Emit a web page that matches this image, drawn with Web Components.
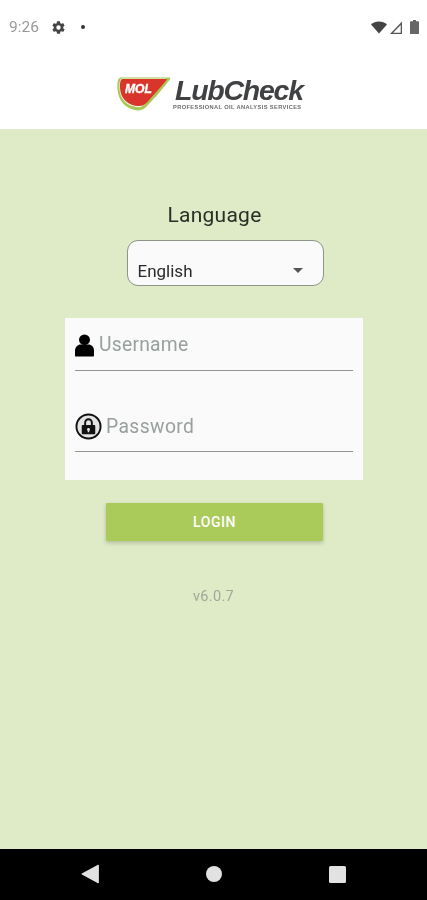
<!DOCTYPE html>
<html><head><meta charset="utf-8"><title>LubCheck</title>
<style>html,body{margin:0;padding:0;height:100%}body{font-family:Roboto,sans-serif;width:427px;height:900px;overflow:hidden}</style>
</head><body>
<app-screen>
  <status-bar slot="status"></status-bar>
  <brand-header slot="header"></brand-header>
  <login-form slot="main"></login-form>
  <nav-bar slot="nav"></nav-bar>
</app-screen>
<script>
function def(name, html){
  customElements.define(name, class extends HTMLElement{
    constructor(){super();this.attachShadow({mode:'open'}).innerHTML=html;}
  });
}
def('app-screen',`<style>:host{display:flex;flex-direction:column;width:427px;height:900px;background:#fff}
.m{flex:1;display:flex;min-height:0}</style>
<slot name="status"></slot><slot name="header"></slot><div class="m"><slot name="main"></slot></div><slot name="nav"></slot>`);

def('status-bar',`<style>:host{display:flex;align-items:center;height:54px;padding:0 8px 0 9px;box-sizing:border-box;color:#999;font:15.500px Roboto,sans-serif;filter:blur(.5px)}
.t{width:42px}svg{display:block}.dot{width:4px;height:4px;border-radius:50%;background:#333;margin-left:15px}
.sp{flex:1}</style>
<span class="t">9:26</span>
<svg width="15" height="15" viewBox="0 0 24 24"><path fill="#444" fill-rule="evenodd" d="M19.4 13c.04-.32.1-.66.1-1s-.06-.68-.1-1l2.100-1.650c.2-.15.25-.42.12-.64l-2-3.460c-.12-.22-.4-.3-.6-.22l-2.500 1c-.52-.4-1.080-.73-1.700-.98l-.37-2.650A.5.5 0 0 0 14 2h-4a.5.5 0 0 0-.5.42l-.37 2.650c-.62.25-1.180.58-1.700.98l-2.500-1c-.22-.08-.48 0-.6.22l-2 3.460c-.13.22-.07.49.12.64L4.570 11c-.04.32-.07.66-.07 1s.03.68.07 1l-2.100 1.650c-.2.15-.25.42-.12.64l2 3.460c.12.22.4.3.6.22l2.500-1c.52.4 1.080.73 1.700.98l.37 2.650c.04.24.25.42.5.42h4c.25 0 .46-.18.5-.42l.37-2.650c.62-.25 1.180-.58 1.700-.98l2.500 1c.22.08.48 0 .6-.22l2-3.460c.13-.22.07-.49-.12-.64L19.400 13zM12 15.500a3.500 3.500 0 1 1 0-7 3.500 3.500 0 0 1 0 7z"/></svg>
<span class="dot"></span><span class="sp"></span>
<svg width="16" height="13" viewBox="0 0 16 13" style="margin-right:3px"><path fill="#444" d="M0 3.600C2 1.600 4.800.4 8 .4s6 1.200 8 3.200L8 12.600z"/></svg>
<svg width="12" height="13" viewBox="0 0 13 13" preserveAspectRatio="none" style="margin-right:8px"><path fill="#555" fill-rule="evenodd" d="M13 .5V13H0zM11.600 4 3.400 11.800h8.200z"/></svg>
<svg width="9" height="14" viewBox="0 0 9 14"><path fill="#666" d="M3 0h3v1.300h2.200c.4 0 .8.3.8.8V14H0V2.100c0-.5.3-.8.8-.8H3z"/></svg>`);

def('brand-header',`<style>:host{display:flex;justify-content:center;height:75px;background:#fff;box-sizing:border-box;padding-top:23px;padding-right:5px}
.b{display:flex;gap:4px;align-items:flex-start;filter:blur(.45px)}
.r{display:flex;flex-direction:column;align-items:stretch;width:130px}
.n{font:italic 700 28.500px/27px "Liberation Sans",Arial,sans-serif;letter-spacing:-1.250px;color:#3f4143;white-space:nowrap}
.s{font:700 5.700px/6px "Liberation Sans",Arial,sans-serif;color:#6b6b6b;white-space:nowrap;letter-spacing:.38px;margin-left:-2px}
svg{display:block;flex:none}</style>
<div class="b">
<svg width="54" height="34" viewBox="0 0 54 34">
<path fill="#a9c957" d="M5 .4h47c1.300 0 1.800 1 1 2C46 11 38 21 31 28c-3 3.400-6 5.600-10 5.400C12 33 4 27 1.500 18-.3 11 .1 4 1.700 1.700 2.400.8 3.600.4 5 .4z"/>
<path fill="#f3f6e6" d="M5.500 1.400h43.500c-6 8-13 17-19.500 24-3 3.300-5 5-8.500 4.800C13 29.800 5.500 25 3.200 16.500 2 11 2.200 5.500 3.300 2.800c.5-.9 1.200-1.400 2.200-1.400z"/>
<path fill="#d9352a" d="M6 2h43c.8 0 1 .5.600 1C43 11 36 19 30 25.500c-2.800 2.800-5.500 3.800-9 3.500C13 28.500 6 24 3.800 16 2.600 11 2.800 6.500 3.600 3.800 4 2.600 5 2 6 2z"/>
<text x="8" y="16" font-family="Liberation Sans, Arial, sans-serif" font-weight="700" font-style="italic" font-size="13" fill="#fff" stroke="#fff" stroke-width=".4" textLength="27" lengthAdjust="spacingAndGlyphs">MOL</text>
</svg>
<div class="r"><div class="n">LubCheck</div><div class="s">PROFESSIONAL OIL ANALYSIS SERVICES</div></div>
</div>`);

def('login-form',`<style>:host{display:flex;flex-direction:column;align-items:center;flex:1;background:#deebc6;box-sizing:border-box;padding-top:74px;color:#222}
.l{font-size:21px;line-height:24px;color:#2b2f28;letter-spacing:.25px;margin-left:2px;filter:blur(.3px)}
.sel{box-sizing:border-box;width:197px;height:46px;margin-top:13px;margin-left:23px;background:#fafafa;border:1px solid #8d9488;border-radius:11px;display:flex;align-items:flex-end;padding:0 20px 2px 10px;font-size:17px;line-height:24px;color:#2a2a2a;justify-content:space-between}
.sel span:first-child{filter:blur(.3px)}
.arr{width:0;height:0;border:5.500px solid transparent;border-top:5.500px solid #555;border-bottom:0;margin-bottom:10px}
.card{box-sizing:border-box;width:298px;height:162px;margin-top:32px;background:#fafafa;padding:0 10px;display:flex;flex-direction:column;margin-left:1px}
.btn{width:217px;height:38px;margin-top:23px;margin-left:2px;background:#aacb5a;color:#fff;font:500 14px/38px Roboto,sans-serif;text-align:center;letter-spacing:.55px;box-shadow:0 2px 4px rgba(0,0,0,.2);border-radius:1px}
.v{margin-top:46px;font-size:14.500px;line-height:20px;color:#a0a89a;letter-spacing:.3px;filter:blur(.3px)}
svg{display:block;flex:none}</style>
<div class="l">Language</div>
<div class="sel"><span>English</span><span class="arr"></span></div>
<div class="card">
<text-row label="Username" pad="13" style="height:53px">
<svg slot="icon" width="20" height="23" viewBox="0 0 20 24" preserveAspectRatio="none"><circle cx="9.500" cy="6" r="5.500"/><path d="M1 23.500c-.8 0-1-.4-1-1v-5c0-4 3-6.500 5.500-6.500h8c3 0 5.500 2.500 5.500 6.500v5c0 .6-.4 1-1 1z"/></svg>
</text-row>
<text-row label="Password" pad="11" spacing=".4" style="height:81px">
<svg slot="icon" width="27" height="27" viewBox="0 0 28 28"><circle cx="14" cy="14" r="12.500" fill="#e4e4e4" stroke="#111" stroke-width="2"/><path fill="#111" fill-rule="evenodd" d="M8 12.500h1.500V10a4.500 4.500 0 0 1 9 0v2.500H20c.6 0 1 .4 1 1V21c0 .6-.4 1-1 1H8c-.6 0-1-.4-1-1v-7.500c0-.6.4-1 1-1zM11.500 12.500h5V10a2.500 2.500 0 0 0-5 0zM14 15.500a1.500 1.500 0 0 0-.8 2.800V20h1.600v-1.700a1.500 1.500 0 0 0-.8-2.800z"/></svg>
</text-row>
</div>
<div class="btn">LOGIN</div>
<div class="v">v6.0.7</div>`);

customElements.define('text-row', class extends HTMLElement{
  constructor(){super();
    const r=this.attachShadow({mode:'open'});
    r.innerHTML=`<style>:host{display:flex;box-sizing:border-box;border-bottom:1px solid #8f9692;align-items:flex-end;padding-bottom:${this.getAttribute('pad')}px;color:#98a09c;font-size:19.300px;line-height:24px;letter-spacing:${this.getAttribute('spacing')||'.25'}px}
    ::slotted(svg){display:block;flex:none}
    .w{display:flex;align-items:center;gap:4px}span{filter:blur(.3px)}</style>
    <div class="w"><slot name="icon"></slot><span>${this.getAttribute('label')}</span></div>`;
  }
});

def('nav-bar',`<style>:host{display:flex;height:51px;background:#000;align-items:center;justify-content:center;padding-bottom:1px;box-sizing:border-box}
.c{width:123px;display:flex;justify-content:center}svg{display:block}</style>
<div class="c" style="margin-right:1px"><svg width="18" height="20" viewBox="0 0 18 20"><path fill="#e2e2e2" d="M17 .8c.4-.2.9 0 .9.6v17.200c0 .6-.5.8-.9.6L.8 10.500c-.4-.2-.4-.8 0-1z"/></svg></div>
<div class="c"><svg width="16" height="16"><circle cx="8" cy="8" r="8" fill="#e2e2e2"/></svg></div>
<div class="c"><svg width="17" height="17"><rect width="17" height="17" rx="1.500" fill="#e2e2e2"/></svg></div>`);
</script>
</body></html>
